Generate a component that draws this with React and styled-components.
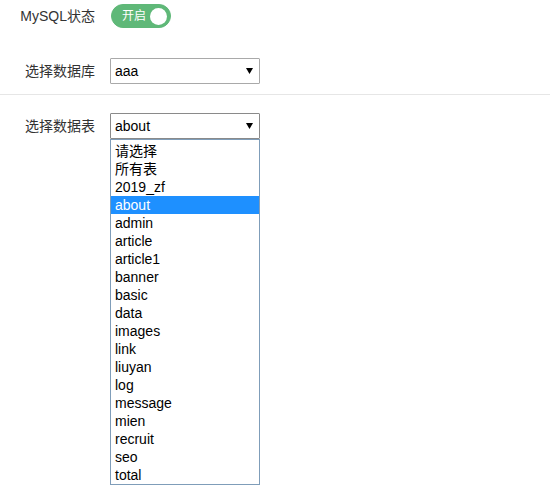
import React from "react";
import styled, { createGlobalStyle } from "styled-components";

const Global = createGlobalStyle`
  html, body { margin: 0; padding: 0; background: #fff; }
  body {
    font-family: "Liberation Sans", Arial, "Noto Sans CJK SC", sans-serif;
    font-size: 14px;
    color: #333;
  }
`;

const Page = styled.div`
  width: 550px;
  height: 500px;
  overflow: hidden;
`;

const Row = styled.div`
  display: flex;
  align-items: center;
  height: ${(p) => p.$h || 26}px;
  margin-top: ${(p) => p.$mt || 0}px;
  position: relative;
`;

const Label = styled.label`
  box-sizing: border-box;
  width: 110px;
  padding-right: 15px;
  text-align: right;
  line-height: 20px;
  font-size: 14px;
  color: #333;
  white-space: nowrap;
`;

const Switch = styled.div`
  box-sizing: border-box;
  width: 60px;
  height: 24px;
  margin-left: 1px;
  border-radius: 12px;
  background: #5fb878;
  border: 1px solid #5fb878;
  display: flex;
  align-items: center;
  justify-content: space-between;
  padding: 0 3px 0 10px;
`;

const SwitchText = styled.span`
  color: #fff;
  font-size: 12px;
  line-height: 16px;
`;

const Knob = styled.span`
  width: 17px;
  height: 17px;
  border-radius: 50%;
  background: #fff;
`;

const Divider = styled.div`
  height: 1px;
  background: #e6e6e6;
  margin-top: 10px;
`;

const SelectWrap = styled.div`
  position: relative;
`;

const Select = styled.div`
  box-sizing: border-box;
  width: 150px;
  height: 26px;
  border: 1px solid ${(p) => (p.$open ? "#8a8a8a" : "#a9a9a9")};
  border-radius: 1px;
  background: #fff;
  display: flex;
  align-items: center;
  justify-content: space-between;
  padding: 0 6px 0 4px;
  color: #000;
  font-size: 14px;
`;

const Arrow = styled.svg`
  width: 7px;
  height: 6px;
  display: block;
`;

const List = styled.ul`
  position: absolute;
  left: 0;
  top: 26px;
  box-sizing: border-box;
  width: 150px;
  margin: 0;
  padding: 2px 0 0;
  list-style: none;
  background: #fff;
  border: 1px solid #7f9db9;
`;

const Option = styled.li`
  height: 18px;
  line-height: 18px;
  padding-left: 4px;
  font-size: 14px;
  color: ${(p) => (p.$active ? "#fff" : "#000")};
  background: ${(p) => (p.$active ? "#1e90ff" : "transparent")};
  white-space: nowrap;
`;

const tables = [
  "请选择",
  "所有表",
  "2019_zf",
  "about",
  "admin",
  "article",
  "article1",
  "banner",
  "basic",
  "data",
  "images",
  "link",
  "liuyan",
  "log",
  "message",
  "mien",
  "recruit",
  "seo",
  "total",
];

const DownArrow = () => (
  <Arrow viewBox="0 0 7 6">
    <path d="M0 0 H7 L3.5 6 Z" fill="#000" />
  </Arrow>
);

export default function App() {
  return (
    <Page>
      <Global />
      <Row $h={32}>
        <Label>MySQL状态</Label>
        <Switch>
          <SwitchText>开启</SwitchText>
          <Knob />
        </Switch>
      </Row>
      <Row $mt={26}>
        <Label>选择数据库</Label>
        <Select>
          <span>aaa</span>
          <DownArrow />
        </Select>
      </Row>
      <Divider />
      <Row $mt={18}>
        <Label>选择数据表</Label>
        <SelectWrap>
          <Select $open>
            <span>about</span>
            <DownArrow />
          </Select>
          <List>
            {tables.map((t) => (
              <Option key={t} $active={t === "about"}>
                {t}
              </Option>
            ))}
          </List>
        </SelectWrap>
      </Row>
    </Page>
  );
}
